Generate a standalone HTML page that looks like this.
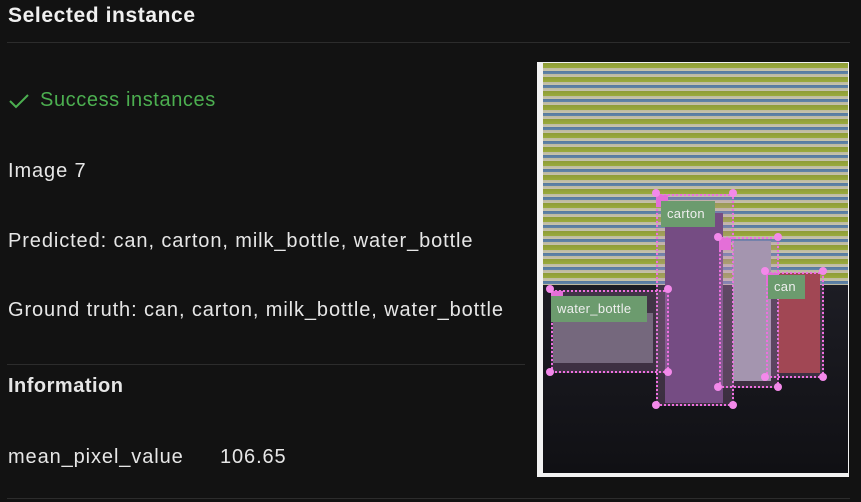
<!DOCTYPE html>
<html><head><style>
body{margin:0;width:861px;height:502px;background:#121212;font-family:"Liberation Sans",sans-serif;color:#e6e6e6;position:relative;overflow:hidden}
.t{position:absolute;left:8px;white-space:nowrap;font-size:20px;letter-spacing:0.9px}
.hr{position:absolute;height:1px;background:#2c2c2c}
.box{position:absolute;border:2px dotted #ee6fe0;background:rgba(200,140,200,0.22)}
.dot{position:absolute;width:8px;height:8px;border-radius:50%;background:#f389ea;margin:-5px 0 0 -5px}
.lab{position:absolute;background:#6c9b6e;color:#eee;font-size:13px;line-height:26px;padding-left:6px;letter-spacing:0.3px}
.sq{position:absolute;width:12px;height:12px;background:#e46fd8}
</style></head><body>
<div class="t" style="top:4px;font-size:21px;font-weight:bold;color:#f0f0f0;letter-spacing:0.6px">Selected instance</div>
<div class="hr" style="left:7px;top:42px;width:843px"></div>
<svg style="position:absolute;left:9px;top:93px" width="20" height="16"><path d="M1 8 L7 14 L19 2" stroke="#4caf50" stroke-width="2" fill="none"/></svg>
<div class="t" style="left:40px;top:89px;color:#4caf50;letter-spacing:0.6px">Success instances</div>
<div class="t" style="top:160px">Image 7</div>
<div class="t" style="top:230px">Predicted: can, carton, milk_bottle, water_bottle</div>
<div class="t" style="top:299px">Ground truth: can, carton, milk_bottle, water_bottle</div>
<div class="hr" style="left:7px;top:364px;width:518px"></div>
<div class="t" style="top:375px;font-weight:bold;letter-spacing:0.5px">Information</div>
<div class="t" style="top:446px">mean_pixel_value</div>
<div class="t" style="left:220px;top:446px">106.65</div>
<div class="hr" style="left:7px;top:498px;width:843px"></div>

<div style="position:absolute;left:537px;top:62px;width:312px;height:415px;background:#f2f2f2"></div>
<div style="position:absolute;left:543px;top:63px;width:305px;height:410px;background:#141418;overflow:hidden">
 <div style="position:absolute;left:0;top:0;width:305px;height:222px;background:repeating-linear-gradient(180deg,#8e9c38 0,#9aab3c 5px,#bdbaa0 5px,#c8c4ac 8px,#56799e 8px,#6285a8 11px,#bdb9a0 11px,#c6c2aa 14px)"></div>
 <div style="position:absolute;left:0;top:222px;width:305px;height:188px;background:linear-gradient(180deg,#1d1d24,#101014)"></div>
 <div style="position:absolute;left:122px;top:150px;width:58px;height:190px;background:#5e3a70"></div>
 <div style="position:absolute;left:190px;top:178px;width:38px;height:140px;background:#9a98a8"></div>
 <div style="position:absolute;left:235px;top:210px;width:42px;height:100px;background:#963434"></div>
 <div style="position:absolute;left:10px;top:250px;width:100px;height:50px;background:#5e5e68"></div>
</div>
<div class="box" style="left:656px;top:194px;width:74px;height:208px"></div>
<div class="box" style="left:551px;top:290px;width:114px;height:79px"></div>
<div class="box" style="left:719px;top:237px;width:56px;height:147px"></div>
<div class="box" style="left:766px;top:272px;width:54px;height:102px"></div>
<div class="sq" style="left:656px;top:195px"></div><div class="sq" style="left:551px;top:291px"></div><div class="sq" style="left:719px;top:238px"></div><div class="sq" style="left:766px;top:273px"></div>
<div class="lab" style="left:661px;top:201px;width:48px">carton</div>
<div class="lab" style="left:551px;top:296px;width:90px">water_bottle</div>
<div class="lab" style="left:768px;top:275px;width:31px;line-height:24px">can</div>
<div class="dot" style="left:657px;top:194px"></div><div class="dot" style="left:734px;top:194px"></div><div class="dot" style="left:657px;top:406px"></div><div class="dot" style="left:734px;top:406px"></div>
<div class="dot" style="left:551px;top:290px"></div><div class="dot" style="left:669px;top:290px"></div><div class="dot" style="left:551px;top:373px"></div><div class="dot" style="left:669px;top:373px"></div>
<div class="dot" style="left:719px;top:238px"></div><div class="dot" style="left:779px;top:238px"></div><div class="dot" style="left:719px;top:388px"></div><div class="dot" style="left:779px;top:388px"></div>
<div class="dot" style="left:766px;top:272px"></div><div class="dot" style="left:824px;top:272px"></div><div class="dot" style="left:766px;top:378px"></div><div class="dot" style="left:824px;top:378px"></div>
</body></html>
